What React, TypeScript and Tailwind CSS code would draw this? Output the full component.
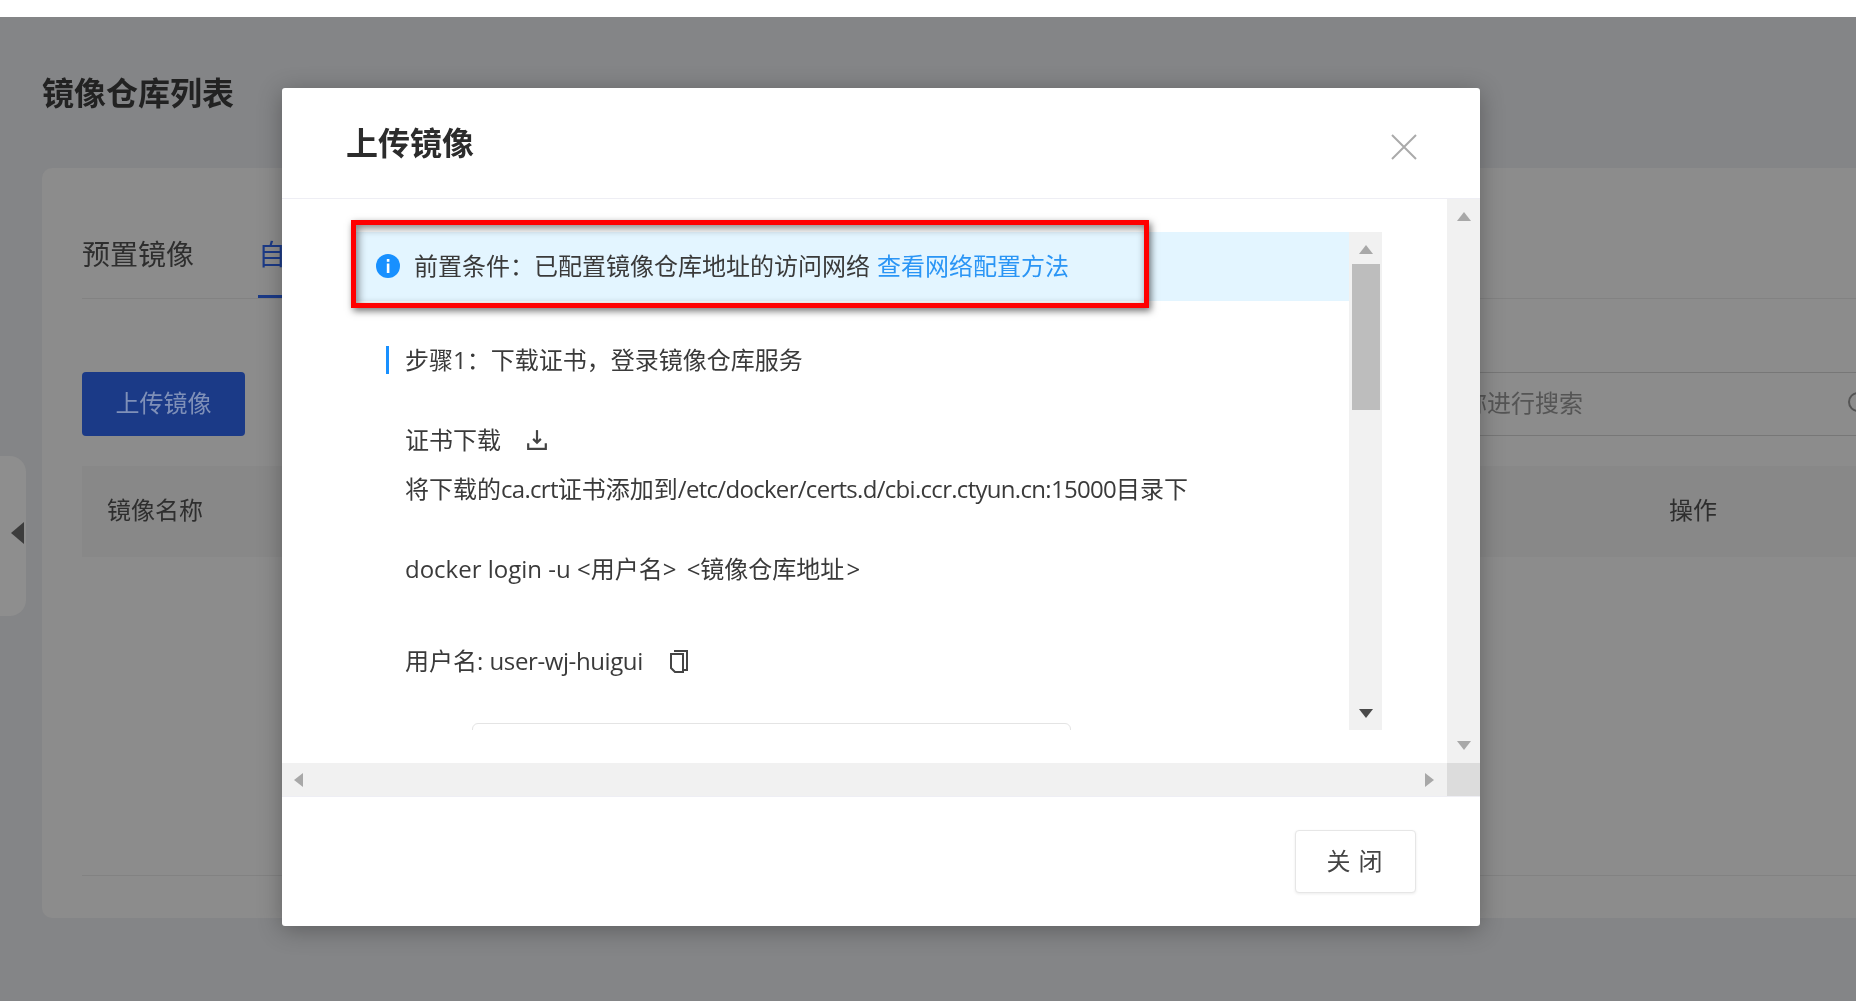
const font = { fontFamily: '"Open Sans", "Noto Sans CJK SC", sans-serif' };

function Tri({ dir, color }: { dir: 'up' | 'down' | 'left' | 'right'; color: string }) {
  const pts = { up: '0,9 7,0 14,9', down: '0,0 14,0 7,9', left: '9,0 9,14 0,7', right: '0,0 9,7 0,14' }[dir];
  const horizontal = dir === 'left' || dir === 'right';
  return (
    <svg width={horizontal ? 9 : 14} height={horizontal ? 14 : 9} className="block shrink-0">
      <polygon points={pts} fill={color} />
    </svg>
  );
}

function InfoIcon() {
  return (
    <svg width="24" height="24" viewBox="0 0 24 24" className="shrink-0">
      <circle cx="12" cy="12" r="12" fill="#1890ff" />
      <rect x="10.8" y="5" width="2.6" height="2.8" fill="#fff" />
      <rect x="10.8" y="9.5" width="2.6" height="9.5" fill="#fff" />
    </svg>
  );
}

function DownloadIcon() {
  return (
    <svg width="22" height="22" viewBox="0 0 20 20" fill="none" stroke="#444" strokeWidth="2" className="shrink-0">
      <path d="M10 1v11" />
      <path d="M6.5 9l3.5 3.5L13.500 9" />
      <path d="M2 13v5h16v-5" />
    </svg>
  );
}

function CopyIcon() {
  return (
    <svg width="20" height="24" viewBox="0 0 20 24" fill="none" stroke="#444" strokeWidth="2" className="shrink-0">
      <path d="M5 2h13v19h-4" />
      <path d="M2 5h12v18H6l-4-4z" />
    </svg>
  );
}

export default function App() {
  return (
    <div className="relative h-[1001px] w-full overflow-hidden bg-[#848587] text-[24px] text-[#333] blur-[0.6px]" style={font}>
      <div className="h-[17px] bg-white" />

      <div className="pl-[42px]">
        <h1 className="mt-[56px] h-[40px] text-[32px] font-bold leading-[40px] text-[#222]">镜像仓库列表</h1>

        <div className="mt-[55px] h-[750px] rounded-l-[10px] bg-[#8c8c8c] pl-[40px]">
          <div className="flex h-[131px] items-end border-b border-[#828282]">
            <div className="h-[62px] w-[113px] text-[28px] leading-[36px] text-[#2e2e2e]">预置镜像</div>
            <div className="ml-[63px] h-[62px] border-b-[3px] border-[#1b3a87] text-[28px] leading-[36px] text-[#1b3a87]">自定义镜像</div>
          </div>

          <div className="mt-[73px] flex h-[64px] w-[1774px] items-stretch">
            <button className="w-[163px] shrink-0 rounded-[4px] bg-[#1b3a87] pb-[2px] text-[24px] text-[#7f90b8]">上传镜像</button>
            <div className="ml-[1058px] flex w-[570px] shrink-0 items-center border-y border-[#777] pb-[3px] pl-[16px] text-[#555]">
              <span className="w-[264px] shrink-0 whitespace-nowrap">请输入镜像名称进行搜索</span>
              <svg width="24" height="24" viewBox="0 0 24 24" fill="none" stroke="#555" strokeWidth="2" className="ml-[264px] shrink-0">
                <circle cx="11" cy="11" r="9" />
              </svg>
            </div>
          </div>

          <div className="mt-[30px] flex h-[91px] items-center bg-[#888888] pb-[4px] pl-[25px] text-[#2e2e2e]">
            <span>镜像名称</span>
            <span className="ml-auto mr-[139px]">操作</span>
          </div>
          <div className="mt-[318px] border-t border-[#828282]" />
        </div>
      </div>

      <div className="absolute left-0 top-[456px] flex h-[160px] w-[26px] items-center justify-center rounded-r-[16px] bg-[#8e8e8e]">
        <svg width="13" height="22" className="mb-[7px] ml-[8px] shrink-0"><polygon points="13,0 13,22 0,11" fill="#3c3c3c" /></svg>
      </div>

      <div className="absolute left-[282px] top-[88px] flex h-[838px] w-[1198px] flex-col rounded-[3px] bg-white shadow-[0_4px_24px_rgba(0,0,0,0.3)]">
        <div className="flex h-[111px] shrink-0 items-center justify-between border-b border-[#eeeef4] pl-[64px] pr-[62px]">
          <span className="text-[32px] font-bold text-[#2c2c2c]">上传镜像</span>
          <svg width="28" height="28" viewBox="0 0 28 28" stroke="#aaa" strokeWidth="2" className="mt-[8px]">
            <path d="M2 2l24 24M26 2L2 26" />
          </svg>
        </div>

        <div className="flex h-[564px] shrink-0">
          <div className="w-[1165px] pl-[70px] pt-[33px]">
            <div className="flex h-[498px]">
              <div className="w-[997px] overflow-hidden">
                <div className="flex h-[69px] items-center gap-[14px] whitespace-nowrap bg-[#e3f5ff] pb-[2px] pl-[24px] text-[#3a3a3a]">
                  <InfoIcon />
                  <span>
                    前置条件{'\uFF1A'}已配置镜像仓库地址的访问网络<span className="ml-[7px] text-[#2a95f5]">查看网络配置方法</span>
                  </span>
                </div>

                <div className="ml-[34px] mt-[45px] h-[28px] border-l-[3px] border-[#1890ff] pl-[16px] leading-[28px] text-[#3a3a3a]">
                  步骤1{'\uFF1A'}下载证书{'\uFF0C'}登录镜像仓库服务
                </div>

                <div className="ml-[53px] mt-[48px] flex h-[36px] items-center gap-[25px] leading-[36px] text-[#3a3a3a]">
                  <span>证书下载</span>
                  <DownloadIcon />
                </div>
                <div className="ml-[53px] mt-[13px] h-[36px] whitespace-nowrap leading-[36px] text-[#3a3a3a]">
                  将下载的<span className="tracking-[-0.7px]">ca.crt</span>证书添加到<span className="tracking-[-0.7px]">/etc/docker/certs.d/cbi.ccr.ctyun.cn:15000</span>目录下
                </div>
                <div className="ml-[53px] mt-[44px] h-[36px] whitespace-nowrap leading-[36px] text-[#3a3a3a]">
                  docker login -u &lt;用户名&gt; <span className="ml-[4px]">&lt;镜像仓库地址</span><span className="ml-[2px]">&gt;</span>
                </div>
                <div className="ml-[53px] mt-[56px] flex h-[36px] items-center gap-[26px] whitespace-nowrap leading-[36px] text-[#3a3a3a]">
                  <span>用户名: <span className="tracking-[-0.4px]">user-wj-huigui</span></span>
                  <CopyIcon />
                </div>
                <div className="ml-[120px] mt-[44px] h-[40px] w-[599px] rounded-t-[6px] border border-[#e4e4e4]" />
              </div>

              <div className="flex w-[33px] flex-col items-center bg-[#f1f1f1] pt-[13px]">
                <Tri dir="up" color="#a8a8a8" />
                <div className="mt-[10px] h-[146px] w-[28px] bg-[#bdbdbd]" />
                <div className="mt-auto pb-[12px]">
                  <Tri dir="down" color="#4a4a4a" />
                </div>
              </div>
            </div>
          </div>

          <div className="flex w-[33px] flex-col items-center justify-between bg-[#f1f1f1] py-[13px]">
            <Tri dir="up" color="#a8a8a8" />
            <Tri dir="down" color="#a8a8a8" />
          </div>
        </div>

        <div className="flex h-[34px] shrink-0 border-b border-[#eeeef4]">
          <div className="flex w-[1165px] items-center justify-between bg-[#f1f1f1] pl-[12px] pr-[13px]">
            <Tri dir="left" color="#a8a8a8" />
            <Tri dir="right" color="#a8a8a8" />
          </div>
          <div className="w-[33px] bg-[#dcdcdc]" />
        </div>

        <div className="flex flex-1 items-start justify-end pr-[64px] pt-[33px]">
          <button className="h-[63px] w-[121px] rounded-[4px] border border-[#e6e6e6] bg-white pb-[2px] pl-[6px] text-[24px] tracking-[8px] text-[#444] shadow-[0_1px_3px_rgba(0,0,0,0.08)]">
            关闭
          </button>
        </div>

        <div className="pointer-events-none absolute left-[69px] top-[132px] h-[88px] w-[798px] border-[5px] border-[#f00] shadow-[2px_3px_7px_rgba(0,0,0,0.55),inset_2px_3px_8px_rgba(0,0,0,0.5)]" />
      </div>
    </div>
  );
}
